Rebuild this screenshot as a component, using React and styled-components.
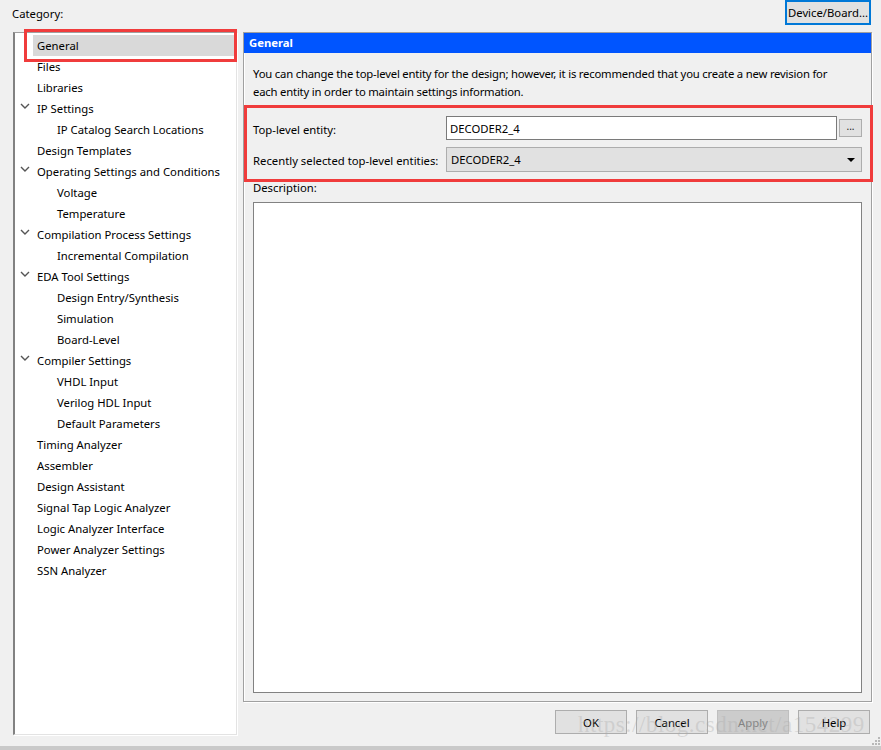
import { createGlobalStyle, styled } from "styled-components"

const GlobalStyle = createGlobalStyle`
  html, body {
    margin: 0;
    padding: 0;
    background: #f0f0f0;
  }
  #root {
    height: 750px;
  }
`

const tree = [
  { label: "General", selected: true },
  { label: "Files" },
  { label: "Libraries" },
  { label: "IP Settings", open: true },
  { label: "IP Catalog Search Locations", level: 1 },
  { label: "Design Templates" },
  { label: "Operating Settings and Conditions", open: true },
  { label: "Voltage", level: 1 },
  { label: "Temperature", level: 1 },
  { label: "Compilation Process Settings", open: true },
  { label: "Incremental Compilation", level: 1 },
  { label: "EDA Tool Settings", open: true },
  { label: "Design Entry/Synthesis", level: 1 },
  { label: "Simulation", level: 1 },
  { label: "Board-Level", level: 1 },
  { label: "Compiler Settings", open: true },
  { label: "VHDL Input", level: 1 },
  { label: "Verilog HDL Input", level: 1 },
  { label: "Default Parameters", level: 1 },
  { label: "Timing Analyzer" },
  { label: "Assembler" },
  { label: "Design Assistant" },
  { label: "Signal Tap Logic Analyzer" },
  { label: "Logic Analyzer Interface" },
  { label: "Power Analyzer Settings" },
  { label: "SSN Analyzer" },
]

function Chevron(){
  return (
    <svg width="10" height="6" viewBox="0 0 10 6">
      <path d="M1 1 L5 5 L9 1" fill="none" stroke="#555" strokeWidth="1.4" />
    </svg>
  )
}

export default function App(){
  return (
    <Page>
      <GlobalStyle />
      <TopBar>
        <Caption>Category:</Caption>
        <FocusButton>Device/Board...</FocusButton>
      </TopBar>
      <Main>
        <Tree>
          {tree.map((item) => (
            <TreeRow key={item.label} $level={item.level || 0}>
              <Toggle>{item.open && <Chevron />}</Toggle>
              <TreeLabel $selected={item.selected}>{item.label}</TreeLabel>
            </TreeRow>
          ))}
        </Tree>
        <RightColumn>
          <Group>
            <GroupHeader>General</GroupHeader>
            <GroupBody>
              <Intro>
                You can change the top-level entity for the design; however, it is recommended that you create a new revision for each entity in order to maintain settings information.
              </Intro>
              <FormGrid>
                <FieldLabel>Top-level entity:</FieldLabel>
                <InputRow>
                  <TextInput>DECODER2_4</TextInput>
                  <BrowseButton>...</BrowseButton>
                </InputRow>
                <FieldLabel>Recently selected top-level entities:</FieldLabel>
                <Select>
                  <span>DECODER2_4</span>
                  <Arrow />
                </Select>
              </FormGrid>
              <DescLabel>Description:</DescLabel>
              <DescBox />
            </GroupBody>
          </Group>
          <ButtonRow>
            <DialogButton>OK</DialogButton>
            <DialogButton>Cancel</DialogButton>
            <DialogButton disabled>Apply</DialogButton>
            <DialogButton>Help</DialogButton>
          </ButtonRow>
        </RightColumn>
      </Main>
      <BottomEdge />
      <Highlight style={{ left: 24, top: 29, width: 213, height: 33 }} />
      <Highlight style={{ left: 244, top: 105, width: 629, height: 77 }} />
      <Watermark>https://blog.csdn.net/a154299</Watermark>
      <Grip width="8" height="8" viewBox="0 0 8 8">
        <rect x="6" y="0" width="2" height="2" fill="#b8b8b8" />
        <rect x="3" y="3" width="2" height="2" fill="#b8b8b8" />
        <rect x="6" y="3" width="2" height="2" fill="#b8b8b8" />
        <rect x="0" y="6" width="2" height="2" fill="#b8b8b8" />
        <rect x="3" y="6" width="2" height="2" fill="#b8b8b8" />
        <rect x="6" y="6" width="2" height="2" fill="#b8b8b8" />
      </Grip>
    </Page>
  )
}

const Page = styled.div`
  position: relative;
  height: 750px;
  width: 881px;
  display: flex;
  flex-direction: column;
  background: #f0f0f0;
  font-family: "Noto Sans", "Open Sans", sans-serif;
  font-size: 11.3px;
  color: #000;
  overflow: hidden;
`
const TopBar = styled.div`
  height: 32px;
  display: flex;
  justify-content: space-between;
  align-items: flex-start;
  padding: 0 10px 0 12px;
  box-sizing: border-box;
`
const Caption = styled.div`
  padding-top: 6px;
  line-height: 16px;
`
const FocusButton = styled.div`
  width: 86px;
  height: 25px;
  box-sizing: border-box;
  border: 2px solid #0078d7;
  display: flex;
  align-items: center;
  justify-content: center;
  white-space: nowrap;
  background: #e1e1e1;
`
const Main = styled.div`
  display: flex;
  padding: 0 9px 0 13px;
  height: 703px;
`
const Tree = styled.div`
  width: 224px;
  margin-right: 6px;
  box-sizing: border-box;
  background: #fff;
  border-top: 1px solid #a0a0a0;
  border-left: 2px solid #828282;
  border-right: 1px solid #e3e3e3;
  border-bottom: 1px solid #e3e3e3;
  box-shadow: 1px 1px 0 #fff;
  padding-top: 2px;
`
const TreeRow = styled.div`
  display: flex;
  align-items: center;
  height: 21px;
  padding-left: ${p => 4 + p.$level * 20}px;
`
const Toggle = styled.div`
  width: 14px;
  height: 21px;
  display: flex;
  align-items: center;
  justify-content: flex-start;
  padding-left: 1px;
  box-sizing: border-box;
  margin-top: -6px;
`
const TreeLabel = styled.div`
  flex: 1;
  height: 21px;
  line-height: 21px;
  padding-left: 4px;
  white-space: nowrap;
  background: ${p => p.$selected ? "#d9d9d9" : "transparent"};
`
const RightColumn = styled.div`
  flex: 1;
  display: flex;
  flex-direction: column;
`
const Group = styled.div`
  height: 670px;
  box-sizing: border-box;
  border: 1px solid #a0a0a0;
  box-shadow: 1px 1px 0 #fff, inset 1px 1px 0 #fff;
  display: flex;
  flex-direction: column;
`
const GroupHeader = styled.div`
  height: 20px;
  line-height: 20px;
  background: #0055ff;
  color: #fff;
  font-weight: bold;
  padding-left: 5px;
`
const GroupBody = styled.div`
  flex: 1;
  display: flex;
  flex-direction: column;
  padding: 12px 9px 8px 9px;
`
const Intro = styled.p`
  margin: 0;
  max-width: 592px;
  line-height: 18px;
  letter-spacing: -0.2px;
`
const FormGrid = styled.div`
  display: grid;
  grid-template-columns: 193px 1fr;
  row-gap: 7px;
  align-items: center;
  margin-top: 15px;
`
const FieldLabel = styled.div`
  white-space: nowrap;
  padding-top: 2px;
`
const InputRow = styled.div`
  display: flex;
  align-items: center;
  gap: 2px;
`
const TextInput = styled.div`
  flex: 1;
  height: 24px;
  box-sizing: border-box;
  border: 1px solid #7a7a7a;
  background: #fff;
  padding-left: 3px;
  display: flex;
  align-items: center;
`
const BrowseButton = styled.div`
  width: 23px;
  height: 18px;
  box-sizing: border-box;
  border: 1px solid #adadad;
  background: #e1e1e1;
  font-size: 10px;
  line-height: 12px;
  text-align: center;
  color: #222;
`
const Select = styled.div`
  height: 25px;
  box-sizing: border-box;
  border: 1px solid #adadad;
  background: #e1e1e1;
  display: flex;
  align-items: center;
  justify-content: space-between;
  padding: 0 6px 0 4px;
`
const Arrow = styled.div`
  width: 0;
  height: 0;
  border-left: 4px solid transparent;
  border-right: 4px solid transparent;
  border-top: 4px solid #000;
`
const DescLabel = styled.div`
  margin-top: 8px;
  line-height: 16px;
`
const DescBox = styled.div`
  flex: 1;
  margin-top: 6px;
  border: 1px solid #828282;
  background: #fff;
`
const ButtonRow = styled.div`
  display: flex;
  justify-content: flex-end;
  gap: 9px;
  padding: 8px 2px 0 0;
`
const DialogButton = styled.div`
  width: 72px;
  height: 24px;
  box-sizing: border-box;
  border: 1px solid ${p => p.disabled ? "#bfbfbf" : "#adadad"};
  background: ${p => p.disabled ? "#cccccc" : "#e1e1e1"};
  color: ${p => p.disabled ? "#838383" : "#000"};
  display: flex;
  align-items: center;
  justify-content: center;
`
const BottomEdge = styled.div`
  margin-top: auto;
  height: 4px;
  background: #c9c9c9;
`
const Highlight = styled.div`
  position: absolute;
  box-sizing: border-box;
  border: 3px solid #f03c3c;
  pointer-events: none;
`
const Watermark = styled.div`
  position: absolute;
  left: 578px;
  top: 712px;
  font-family: "Liberation Serif", serif;
  font-size: 23px;
  letter-spacing: 0.5px;
  color: rgba(170, 170, 170, 0.35);
  white-space: nowrap;
  pointer-events: none;
`
const Grip = styled.svg`
  position: absolute;
  right: 1px;
  bottom: 5px;
`
